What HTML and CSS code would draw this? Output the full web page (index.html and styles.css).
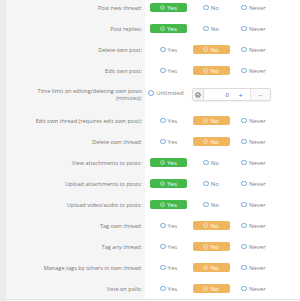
FILE: index.html
```html
<!DOCTYPE html>
<html lang="en">
<head>
  <meta charset="UTF-8">
  <title>Permissions</title>
  <link rel="stylesheet" href="styles.css">
</head>
<body>
  <div class="page">
    <div class="rail"></div>
    <div class="form">

      <div class="row">
        <div class="label">Post new thread:</div>
        <div class="control">
          <div class="choices">
            <span class="choice on-yes"><svg class="tick" viewBox="0 0 10 10"><circle cx="5" cy="5" r="4"/><path d="M3 5.2l1.4 1.4L7 3.9"/></svg>Yes</span>
            <span class="choice"><i class="radio"></i>No</span>
            <span class="choice"><i class="radio"></i>Never</span>
          </div>
        </div>
      </div>

      <div class="row">
        <div class="label">Post replies:</div>
        <div class="control">
          <div class="choices">
            <span class="choice on-yes"><svg class="tick" viewBox="0 0 10 10"><circle cx="5" cy="5" r="4"/><path d="M3 5.2l1.4 1.4L7 3.9"/></svg>Yes</span>
            <span class="choice"><i class="radio"></i>No</span>
            <span class="choice"><i class="radio"></i>Never</span>
          </div>
        </div>
      </div>

      <div class="row">
        <div class="label">Delete own post:</div>
        <div class="control">
          <div class="choices">
            <span class="choice"><i class="radio"></i>Yes</span>
            <span class="choice on-no"><svg class="tick" viewBox="0 0 10 10"><circle cx="5" cy="5" r="4"/><path d="M3 5.2l1.4 1.4L7 3.9"/></svg>No</span>
            <span class="choice"><i class="radio"></i>Never</span>
          </div>
        </div>
      </div>

      <div class="row">
        <div class="label">Edit own post:</div>
        <div class="control">
          <div class="choices">
            <span class="choice"><i class="radio"></i>Yes</span>
            <span class="choice on-no"><svg class="tick" viewBox="0 0 10 10"><circle cx="5" cy="5" r="4"/><path d="M3 5.2l1.4 1.4L7 3.9"/></svg>No</span>
            <span class="choice"><i class="radio"></i>Never</span>
          </div>
        </div>
      </div>

      <div class="row row-tall">
        <div class="label">Time limit on editing/deleting own posts<br>(minutes):</div>
        <div class="control">
          <span class="unlimited"><i class="radio"></i>Unlimited</span>
          <div class="spinner">
            <span class="addon"><svg viewBox="0 0 10 10"><circle cx="5" cy="5" r="3.8"/><path d="M3.1 5.1l1.4 1.4L7 3.9"/></svg></span>
            <span class="value">0</span>
            <span class="step plus">+</span>
            <span class="step minus">&minus;</span>
          </div>
        </div>
      </div>

      <div class="row">
        <div class="label">Edit own thread (requires edit own post):</div>
        <div class="control">
          <div class="choices">
            <span class="choice"><i class="radio"></i>Yes</span>
            <span class="choice on-no"><svg class="tick" viewBox="0 0 10 10"><circle cx="5" cy="5" r="4"/><path d="M3 5.2l1.4 1.4L7 3.9"/></svg>No</span>
            <span class="choice"><i class="radio"></i>Never</span>
          </div>
        </div>
      </div>

      <div class="row">
        <div class="label">Delete own thread:</div>
        <div class="control">
          <div class="choices">
            <span class="choice"><i class="radio"></i>Yes</span>
            <span class="choice on-no"><svg class="tick" viewBox="0 0 10 10"><circle cx="5" cy="5" r="4"/><path d="M3 5.2l1.4 1.4L7 3.9"/></svg>No</span>
            <span class="choice"><i class="radio"></i>Never</span>
          </div>
        </div>
      </div>

      <div class="row">
        <div class="label">View attachments to posts:</div>
        <div class="control">
          <div class="choices">
            <span class="choice on-yes"><svg class="tick" viewBox="0 0 10 10"><circle cx="5" cy="5" r="4"/><path d="M3 5.2l1.4 1.4L7 3.9"/></svg>Yes</span>
            <span class="choice"><i class="radio"></i>No</span>
            <span class="choice"><i class="radio"></i>Never</span>
          </div>
        </div>
      </div>

      <div class="row">
        <div class="label">Upload attachments to posts:</div>
        <div class="control">
          <div class="choices">
            <span class="choice on-yes"><svg class="tick" viewBox="0 0 10 10"><circle cx="5" cy="5" r="4"/><path d="M3 5.2l1.4 1.4L7 3.9"/></svg>Yes</span>
            <span class="choice"><i class="radio"></i>No</span>
            <span class="choice"><i class="radio"></i>Never</span>
          </div>
        </div>
      </div>

      <div class="row">
        <div class="label">Upload video/audio to posts:</div>
        <div class="control">
          <div class="choices">
            <span class="choice on-yes"><svg class="tick" viewBox="0 0 10 10"><circle cx="5" cy="5" r="4"/><path d="M3 5.2l1.4 1.4L7 3.9"/></svg>Yes</span>
            <span class="choice"><i class="radio"></i>No</span>
            <span class="choice"><i class="radio"></i>Never</span>
          </div>
        </div>
      </div>

      <div class="row">
        <div class="label">Tag own thread:</div>
        <div class="control">
          <div class="choices">
            <span class="choice"><i class="radio"></i>Yes</span>
            <span class="choice on-no"><svg class="tick" viewBox="0 0 10 10"><circle cx="5" cy="5" r="4"/><path d="M3 5.2l1.4 1.4L7 3.9"/></svg>No</span>
            <span class="choice"><i class="radio"></i>Never</span>
          </div>
        </div>
      </div>

      <div class="row">
        <div class="label">Tag any thread:</div>
        <div class="control">
          <div class="choices">
            <span class="choice"><i class="radio"></i>Yes</span>
            <span class="choice on-no"><svg class="tick" viewBox="0 0 10 10"><circle cx="5" cy="5" r="4"/><path d="M3 5.2l1.4 1.4L7 3.9"/></svg>No</span>
            <span class="choice"><i class="radio"></i>Never</span>
          </div>
        </div>
      </div>

      <div class="row">
        <div class="label">Manage tags by others in own thread:</div>
        <div class="control">
          <div class="choices">
            <span class="choice"><i class="radio"></i>Yes</span>
            <span class="choice on-no"><svg class="tick" viewBox="0 0 10 10"><circle cx="5" cy="5" r="4"/><path d="M3 5.2l1.4 1.4L7 3.9"/></svg>No</span>
            <span class="choice"><i class="radio"></i>Never</span>
          </div>
        </div>
      </div>

      <div class="row">
        <div class="label">Vote on polls:</div>
        <div class="control">
          <div class="choices">
            <span class="choice"><i class="radio"></i>Yes</span>
            <span class="choice on-no"><svg class="tick" viewBox="0 0 10 10"><circle cx="5" cy="5" r="4"/><path d="M3 5.2l1.4 1.4L7 3.9"/></svg>No</span>
            <span class="choice"><i class="radio"></i>Never</span>
          </div>
        </div>
      </div>

    </div>
  </div>
</body>
</html>
```

FILE: styles.css
```css
body {
  margin: 0;
  font-family: "Open Sans", "Noto Sans", Arial, sans-serif;
  background: #fff;
  color: #777;
  overflow: hidden;
}

.page {
  display: flex;
  height: 301px;
}

.rail {
  width: 6px;
  background-color: #ebebeb;
}

.form {
  flex: 1;
  margin-top: -3px;
  align-self: flex-start;
  border-bottom: 1px solid #e2e2e2;
}

.row {
  display: grid;
  grid-template-columns: 139px 1fr;
  height: 21px;
}

.label {
  display: flex;
  align-items: center;
  justify-content: flex-end;
  padding-right: 3px;
  background-color: #f5f5f5;
  font-size: 5.6px;
  color: #767676;
  text-align: right;
  white-space: nowrap;
}

.control {
  display: flex;
  align-items: center;
  padding-left: 5px;
}

.choices {
  display: grid;
  grid-template-columns: repeat(3, 37px);
  column-gap: 5.5px;
}

.choice {
  display: flex;
  align-items: center;
  justify-content: center;
  gap: 2px;
  height: 9.5px;
  border-radius: 2px;
  font-size: 6px;
  color: #808080;
}

.radio {
  display: inline-block;
  width: 3.8px;
  height: 3.8px;
  border: 0.8px solid #72abdd;
  border-radius: 50%;
  background: #fff;
}

.tick {
  width: 5px;
  height: 5px;
  fill: none;
  stroke: #fff;
  stroke-width: 1;
}

.on-yes {
  background-color: #45b84b;
  color: #fff;
}

.on-no {
  background-color: #efb55f;
  color: #fff;
}

/* two-line row with the number box */
.row-tall {
  height: 29px;
}

.row-tall .label {
  align-items: flex-start;
  padding-top: 6.5px;
  line-height: 7px;
}

.row-tall .control {
  align-items: flex-start;
  padding-top: 7px;
  padding-left: 3px;
}

.unlimited {
  display: flex;
  align-items: center;
  gap: 2.5px;
  height: 10px;
  width: 44px;
  font-size: 6px;
  color: #808080;
}

.spinner {
  display: flex;
  width: 77px;
  height: 11px;
  border: 1px solid #dcdcdc;
  border-radius: 2px;
  box-shadow: 0 1px 2px rgba(0, 0, 0, 0.06);
  font-size: 6px;
}

.addon {
  display: flex;
  align-items: center;
  justify-content: center;
  width: 10px;
  background-color: #f4f4f4;
  border-right: 1px solid #dcdcdc;
}

.addon svg {
  width: 6px;
  height: 6px;
  fill: none;
  stroke: #333;
  stroke-width: 1.1;
}

.value {
  flex: 1;
  display: flex;
  align-items: center;
  justify-content: flex-end;
  padding-right: 2px;
  color: #555;
}

.step {
  display: flex;
  align-items: center;
  justify-content: center;
  width: 19px;
  border-left: 1px solid #e3e3e3;
  background-color: #fafafa;
  font-size: 8px;
}

.plus {
  color: #3c8ed8;
  border-left: none;
  background-color: #fff;
}

.minus {
  color: #8ab1d6;
}
```
